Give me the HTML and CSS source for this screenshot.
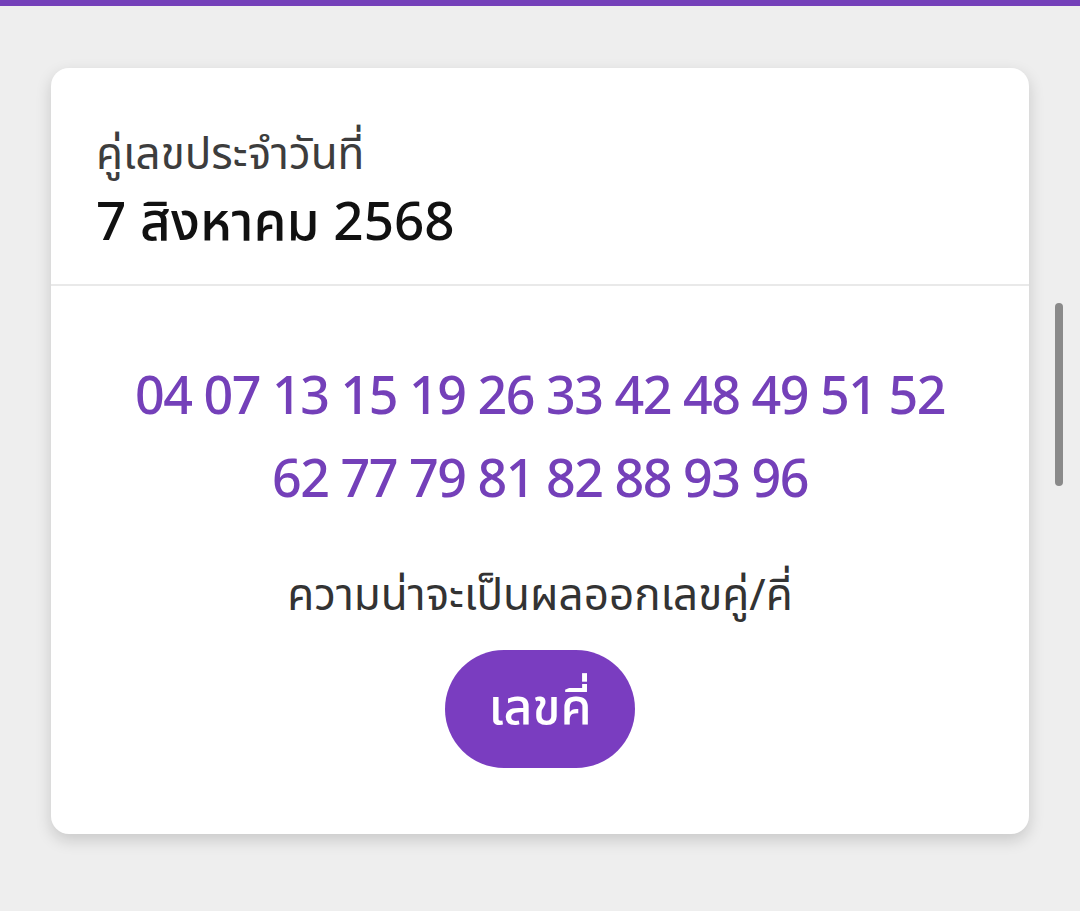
FILE: index.html
```html
<!DOCTYPE html>
<html lang="th">
<head>
<meta charset="utf-8">
<link rel="stylesheet" href="styles.css">
</head>
<body>
<div class="topbar"></div>
<main class="page">
  <section class="card">
    <header class="card-head">
      <div class="label">คู่เลขประจำวันที่</div>
      <div class="date">7 สิงหาคม 2568</div>
    </header>
    <div class="card-body">
      <div class="numbers">
        <div class="num-line">04 07 13 15 19 26 33 42 48 49 51 52</div>
        <div class="num-line">62 77 79 81 82 88 93 96</div>
      </div>
      <div class="prob">ความน่าจะเป็นผลออกเลขคู่/คี่</div>
      <div class="pill">เลขคี่</div>
    </div>
  </section>
</main>
<div class="scrollbar"></div>
</body>
</html>
```
FILE: styles.css
```css
html, body {
  margin: 0;
  padding: 0;
}
body {
  background: #eeeeee;
  font-family: "Noto Sans", "Noto Sans Thai", "Liberation Sans", sans-serif;
  height: 911px;
  overflow: hidden;
}
.topbar {
  height: 6px;
  background: #7440b9;
}
.page {
  padding: 62px 51px 0;
}
.card {
  background: #ffffff;
  border-radius: 18px;
  box-shadow: 0 6px 16px rgba(0, 0, 0, 0.16);
  height: 766px;
  display: flex;
  flex-direction: column;
}
.card-head {
  height: 218px;
  border-bottom: 2px solid #e9e9e9;
  padding: 52px 45px 0;
  box-sizing: border-box;
}
.label {
  font-size: 44px;
  color: #3d3d3d;
  line-height: 64px;
}
.date {
  font-size: 53px;
  color: #111111;
  font-weight: 500;
  line-height: 72px;
}
.card-body {
  display: flex;
  flex-direction: column;
  align-items: center;
  padding-top: 66px;
}
.numbers {
  display: flex;
  flex-direction: column;
  align-items: center;
}
.num-line {
  font-size: 52px;
  color: #7440b9;
  font-weight: 500;
  line-height: 83px;
  letter-spacing: -1.5px;
}
.prob {
  margin-top: 46px;
  font-size: 44px;
  color: #333333;
  line-height: 58px;
}
.pill {
  margin-top: 28px;
  width: 190px;
  height: 118px;
  border-radius: 59px;
  background: #7a3dc0;
  color: #ffffff;
  font-size: 50px;
  font-weight: 500;
  display: flex;
  align-items: center;
  justify-content: center;
}
.scrollbar {
  position: absolute;
  left: 1055px;
  top: 303px;
  width: 8px;
  height: 183px;
  border-radius: 4px;
  background: #8a8a8a;
}
```
